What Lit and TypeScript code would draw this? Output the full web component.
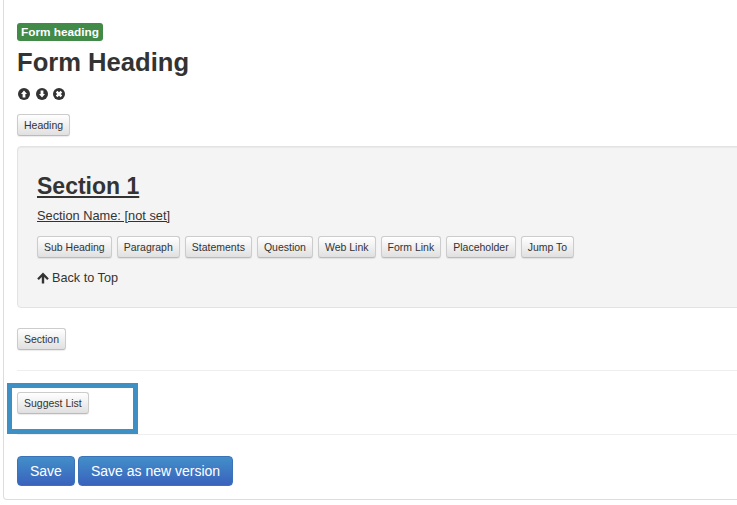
import { LitElement, html, css } from "lit";
import { customElement } from "lit/decorators.js";

const SECTION_BUTTONS = ["Sub Heading", "Paragraph", "Statements", "Question", "Web Link", "Form Link", "Placeholder", "Jump To"];

@customElement("app-root")
export class AppRoot extends LitElement {
  static styles = css`
    :host {
      display: block;
      height: 505px;
      overflow: hidden;
      font-family: "Liberation Sans", Arial, sans-serif;
      font-size: 14px;
      color: #333;
      background: #fff;
    }
    .panel {
      position: relative;
      box-sizing: border-box;
      width: 760px;
      height: 500px;
      margin-left: 3px;
      padding: 23px 0 0 13px;
      background: #fff;
      border: 1px solid #ddd;
      border-top: none;
      border-radius: 0 0 0 4px;
    }
    .label {
      display: block;
      width: fit-content;
      box-sizing: border-box;
      height: 18px;
      padding: 0 4px;
      background: #418a47;
      color: #fff;
      font-size: 11.8px;
      line-height: 18px;
      font-weight: bold;
      border-radius: 3px;
    }
    h1 {
      margin: 4px 0 0;
      font-size: 25.6px;
      line-height: 34px;
      font-weight: bold;
      color: #333;
    }
    .icons {
      display: flex;
      gap: 5.5px;
      margin: 9px 0 0 1px;
      height: 12px;
    }
    .icons svg {
      display: block;
      width: 12px;
      height: 12px;
    }
    .btn {
      display: inline-block;
      box-sizing: border-box;
      height: 22px;
      padding: 0 6px;
      font-family: inherit;
      font-size: 10.5px;
      line-height: 20px;
      color: #333;
      background: linear-gradient(to bottom, #fff, #e0e0e0);
      border: 1px solid #ccc;
      border-color: #ccc #ccc #bbb;
      border-radius: 3px;
      box-shadow: 0 1px 1px rgba(0, 0, 0, 0.08);
      white-space: nowrap;
    }
    .heading-btn {
      display: block;
      margin-top: 14px;
    }
    .well {
      box-sizing: border-box;
      height: 162px;
      margin-top: 10px;
      padding: 26px 19px 0;
      background: #f4f4f4;
      border: 1px solid #e3e3e3;
      border-radius: 4px;
      box-shadow: inset 0 1px 1px rgba(0, 0, 0, 0.05);
    }
    h2 {
      margin: 0;
      font-size: 23px;
      line-height: 26px;
      font-weight: bold;
      text-decoration: underline;
      color: #333;
    }
    .name {
      margin-top: 7px;
      font-size: 12.8px;
      line-height: 20px;
      text-decoration: underline;
    }
    .row {
      display: flex;
      gap: 5px;
      margin-top: 10px;
    }
    .back {
      display: flex;
      align-items: center;
      gap: 3px;
      margin-top: 10px;
      font-size: 12.7px;
      line-height: 20px;
    }
    .back svg {
      width: 12px;
      height: 12px;
      display: block;
    }
    .section-btn {
      display: block;
      margin-top: 20px;
    }
    hr {
      margin: 20px 0 0;
      border: none;
      border-top: 1px solid #eee;
    }
    .suggest {
      display: block;
      margin-top: 21px;
    }
    hr.second {
      margin-top: 20px;
    }
    .actions {
      display: flex;
      gap: 3px;
      margin-top: 21px;
    }
    .primary {
      box-sizing: border-box;
      height: 30px;
      padding: 0 12px;
      font-family: inherit;
      font-size: 14px;
      color: #fff;
      background: linear-gradient(to bottom, #428fc9, #3a62bd);
      border: 1px solid #3a73b8;
      border-radius: 4px;
    }
    .highlight {
      position: absolute;
      left: 3px;
      top: 383px;
      box-sizing: border-box;
      width: 131px;
      height: 51px;
      border: 5px solid #3d8fc4;
    }
  `;

  render() {
    return html`
      <div class="panel">
        <span class="label">Form heading</span>
        <h1>Form Heading</h1>
        <div class="icons">
          <svg viewBox="0 0 12 12"><circle cx="6" cy="6" r="6" fill="#333"/><path d="M6 2.400 9 5.900H7.400V9.400H4.600V5.900H3z" fill="#fff"/></svg>
          <svg viewBox="0 0 12 12"><circle cx="6" cy="6" r="6" fill="#333"/><path d="M6 9.600 9 6.100H7.400V2.600H4.600V6.100H3z" fill="#fff"/></svg>
          <svg viewBox="0 0 12 12"><circle cx="6" cy="6" r="6" fill="#333"/><path d="M4.400 2.800 6 4.200 7.600 2.800 9.200 4.400 7.800 6 9.200 7.600 7.600 9.200 6 7.800 4.400 9.200 2.800 7.600 4.200 6 2.800 4.400z" fill="#fff"/></svg>
        </div>
        <button class="btn heading-btn">Heading</button>
        <div class="well">
          <h2>Section 1</h2>
          <div class="name">Section Name: [not set]</div>
          <div class="row">
            ${SECTION_BUTTONS.map((b) => html`<button class="btn">${b}</button>`)}
          </div>
          <div class="back">
            <svg viewBox="0 0 12 12"><path d="M6 .6 11.800 6.400 10.200 8 7.200 5v6.600H4.800V5L1.800 8 .2 6.400z" fill="#333"/></svg>
            <span>Back to Top</span>
          </div>
        </div>
        <button class="btn section-btn">Section</button>
        <hr />
        <button class="btn suggest">Suggest List</button>
        <hr class="second" />
        <div class="actions">
          <button class="primary">Save</button>
          <button class="primary">Save as new version</button>
        </div>
        <div class="highlight"></div>
      </div>
    `;
  }
}
